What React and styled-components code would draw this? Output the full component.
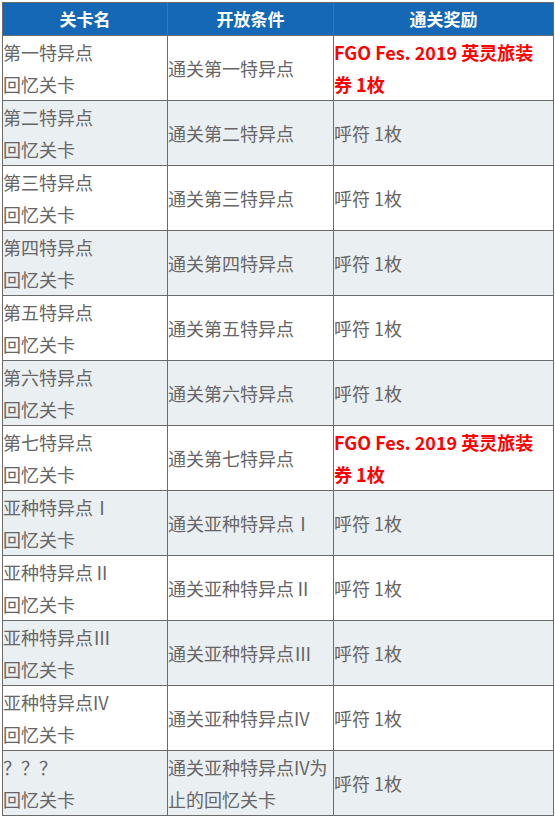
import React from "react";
import styled, { createGlobalStyle } from "styled-components";

const GlobalStyle = createGlobalStyle`
  body {
    margin: 0;
    background: #fff;
    font-family: "Noto Sans CJK SC", "Noto Sans", sans-serif;
  }
`;

const rows = [
  { name: "第一特异点", cond: "通关第一特异点", reward: "FGO Fes. 2019 英灵旅装券 1枚", special: true },
  { name: "第二特异点", cond: "通关第二特异点", reward: "呼符 1枚" },
  { name: "第三特异点", cond: "通关第三特异点", reward: "呼符 1枚" },
  { name: "第四特异点", cond: "通关第四特异点", reward: "呼符 1枚" },
  { name: "第五特异点", cond: "通关第五特异点", reward: "呼符 1枚" },
  { name: "第六特异点", cond: "通关第六特异点", reward: "呼符 1枚" },
  { name: "第七特异点", cond: "通关第七特异点", reward: "FGO Fes. 2019 英灵旅装券 1枚", special: true },
  { name: "亚种特异点Ⅰ", cond: "通关亚种特异点Ⅰ", reward: "呼符 1枚" },
  { name: "亚种特异点Ⅱ", cond: "通关亚种特异点Ⅱ", reward: "呼符 1枚" },
  { name: "亚种特异点Ⅲ", cond: "通关亚种特异点Ⅲ", reward: "呼符 1枚" },
  { name: "亚种特异点IV", cond: "通关亚种特异点IV", reward: "呼符 1枚" },
  { name: "？？？", cond: "通关亚种特异点IV为止的回忆关卡", reward: "呼符 1枚" },
];

function App() {
  return (
    <Wrapper>
      <GlobalStyle />
      <Table>
        <colgroup>
          <col style={{ width: 165 }} />
          <col style={{ width: 166 }} />
          <col style={{ width: 220 }} />
        </colgroup>
        <thead>
          <tr>
            <Th>关卡名</Th>
            <Th>开放条件</Th>
            <Th>通关奖励</Th>
          </tr>
        </thead>
        <tbody>
          {rows.map((r, i) => (
            <Row key={i} $alt={i % 2 === 1}>
              <Td>
                {r.name}
                <br />
                回忆关卡
              </Td>
              <Td>{r.cond}</Td>
              <Td $special={r.special} $padRight={6}>
                {r.reward}
              </Td>
            </Row>
          ))}
        </tbody>
      </Table>
    </Wrapper>
  );
}

export default App;

const Wrapper = styled.div`
  padding: 2px 2px 0 2px;
`;

const Table = styled.table`
  border-collapse: collapse;
  table-layout: fixed;
  width: 551px;
  border: 1px solid #6b6b6b;
`;

const Th = styled.th`
  background: #1468b6;
  color: #fff;
  font-size: 17px;
  font-weight: 700;
  height: 32px;
  line-height: 32px;
  padding: 0;
  text-align: center;
  border: 1px solid #6b6b6b;
`;

const Row = styled.tr`
  background: ${(p) => (p.$alt ? "#eaeff2" : "#fff")};
`;

const Td = styled.td`
  border: 1px solid #6b6b6b;
  padding: 0 ${(p) => p.$padRight || 0}px 0 0;
  height: 64px;
  font-size: 18px;
  line-height: 32px;
  vertical-align: middle;
  text-align: left;
  color: ${(p) => (p.$special ? "#ff0000" : "#666")};
  font-weight: ${(p) => (p.$special ? 700 : 400)};
  word-break: break-all;
`;
